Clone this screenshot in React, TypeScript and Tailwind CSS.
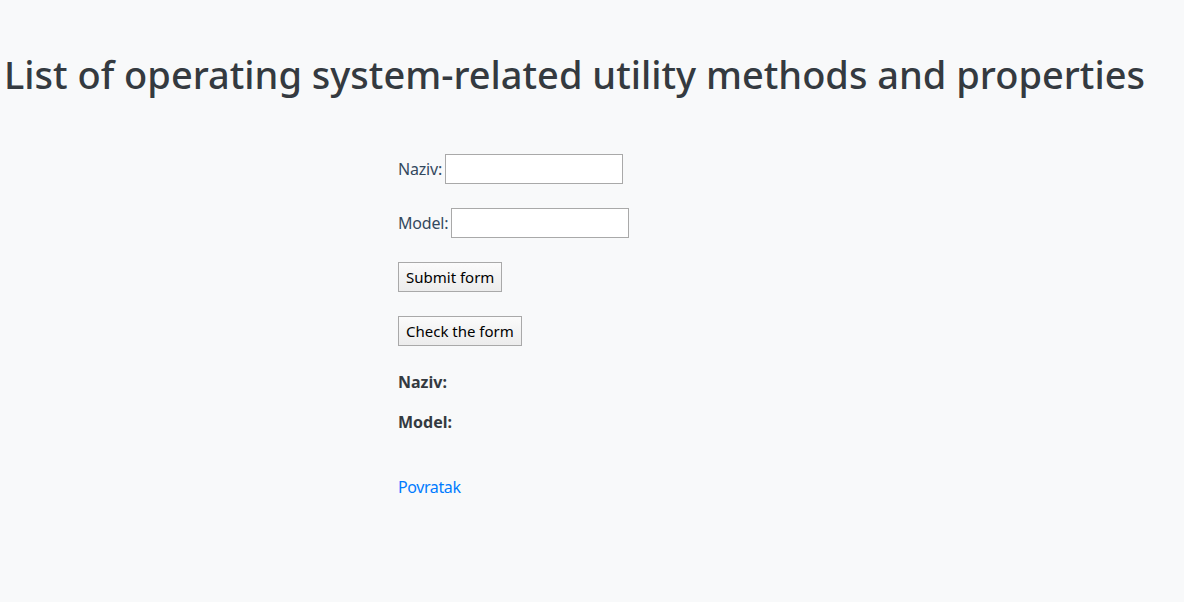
export default function App() {
  const font = { fontFamily: '"Noto Sans", "Open Sans", sans-serif' };
  return (
    <div className="min-h-screen bg-[#f8f9fa] text-[#343a40]" style={font}>
      <h1 className="whitespace-nowrap pt-[50px] pl-[4px] text-[38px] leading-[48px] font-medium text-[#343a40]">
        List of operating system-related utility methods and properties
      </h1>
      <div className="pl-[398px] pt-[56px] text-[16px]">
        <div className="flex h-[30px] items-center">
          <label className="mr-[3px] tracking-[-0.2px] text-[#34495e]">Naziv:</label>
          <input className="h-[30px] w-[178px] border border-[#a9a9a9] bg-white" />
        </div>
        <div className="mt-[24px] flex h-[30px] items-center">
          <label className="mr-[3px] tracking-[-0.2px] text-[#34495e]">Model:</label>
          <input className="h-[30px] w-[178px] border border-[#a9a9a9] bg-white" />
        </div>
        <div className="mt-[24px]">
          <button className="h-[30px] border border-[#a9a9a9] bg-gradient-to-b from-[#fbfbfb] to-[#ececec] px-[7px] text-[15px] text-black">
            Submit form
          </button>
        </div>
        <div className="mt-[24px]">
          <button className="h-[30px] border border-[#a9a9a9] bg-gradient-to-b from-[#fbfbfb] to-[#ececec] px-[7px] text-[15px] text-black">
            Check the form
          </button>
        </div>
        <p className="mt-[24px] font-bold leading-[24px]">Naziv:</p>
        <p className="mt-[16px] font-bold leading-[24px]">Model:</p>
        <a href="#" className="mt-[41px] block leading-[24px] tracking-[-0.4px] text-[#007bff]">
          Povratak
        </a>
      </div>
    </div>
  );
}
